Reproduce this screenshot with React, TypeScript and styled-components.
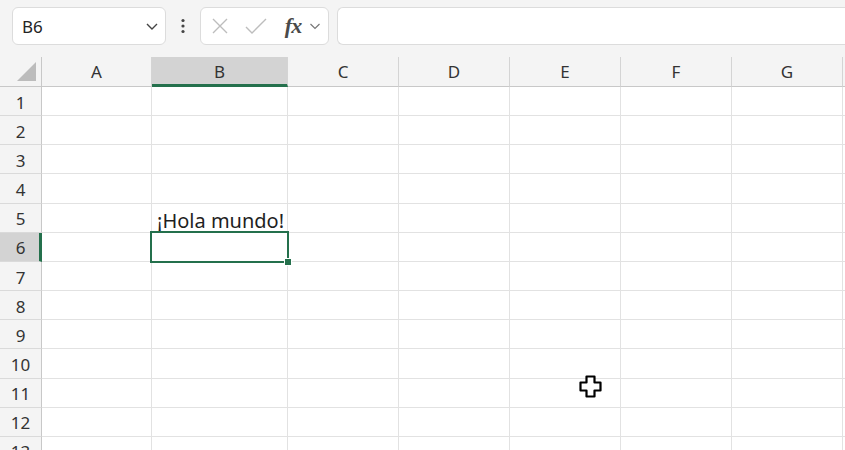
import styled, { createGlobalStyle } from "styled-components";

const GlobalStyle = createGlobalStyle`
  html, body {
    margin: 0;
    padding: 0;
    background: #f4f4f4;
    font-family: "Noto Sans", "Open Sans", sans-serif;
    overflow: hidden;
  }
`;

const Page = styled.div`
  width: 845px;
  height: 450px;
  overflow: hidden;
  background: #f4f4f4;
`;

const Toolbar = styled.div`
  display: flex;
  align-items: center;
  height: 38px;
  padding: 7px 0 12px 12px;
`;

const Box = styled.div<{ $w?: number }>`
  display: flex;
  align-items: center;
  height: 38px;
  box-sizing: border-box;
  background: #fff;
  border: 1px solid #dcdcdc;
  border-radius: 6px;
  ${(p) => (p.$w ? `width: ${p.$w}px;` : "flex: 1; border-right: none; border-radius: 6px 0 0 6px;")}
`;

const NameBox = styled(Box)`
  justify-content: space-between;
  padding: 0 6px 0 9px;
  font-size: 17px;
  color: #242424;
`;

const Kebab = styled.div`
  width: 34px;
  display: flex;
  justify-content: center;
  color: #444;
`;

const FormulaTools = styled(Box)`
  padding: 0 0 0 8px;
  margin-right: 8px;
`;

const ToolIcon = styled.div<{ $w: number }>`
  width: ${(p) => p.$w}px;
  display: flex;
  justify-content: center;
  align-items: center;
`;

const Fx = styled.span`
  font-family: "Liberation Serif", serif;
  font-style: italic;
  font-weight: 700;
  font-size: 22px;
  color: #4a4a4a;
  letter-spacing: -1px;
`;

const Sheet = styled.div`
  position: relative;
  display: grid;
  grid-template-columns: 42px 110px 136px 111px 111px 111px 111px 111px 1fr;
  grid-template-rows: 30px;
  grid-auto-rows: 29.17px;
  background: #fff;
`;

const Corner = styled.div`
  background: #f4f4f4;
  border-right: 1px solid #c8c8c8;
  border-bottom: 1px solid #c8c8c8;
  position: relative;
`;

const ColHead = styled.div<{ $sel?: boolean }>`
  display: flex;
  align-items: center;
  justify-content: center;
  box-sizing: border-box;
  font-size: 17px;
  color: #333;
  background: ${(p) => (p.$sel ? "#d3d3d3" : "#f4f4f4")};
  border-right: 1px solid #d4d4d4;
  border-bottom: ${(p) => (p.$sel ? "3px solid #24704c" : "1px solid #c8c8c8")};
  padding-top: ${(p) => (p.$sel ? "2px" : "0")};
`;

const RowHead = styled.div<{ $sel?: boolean }>`
  display: flex;
  align-items: center;
  justify-content: center;
  box-sizing: border-box;
  font-size: 17px;
  padding-top: 2px;
  color: #333;
  background: ${(p) => (p.$sel ? "#d3d3d3" : "#f4f4f4")};
  border-bottom: 1px solid #dadada;
  border-right: ${(p) => (p.$sel ? "3px solid #24704c" : "1px solid #c8c8c8")};
  padding-left: ${(p) => (p.$sel ? "2px" : "0")};
`;

const Cell = styled.div`
  position: relative;
  box-sizing: border-box;
  border-right: 1px solid #e2e2e2;
  border-bottom: 1px solid #e2e2e2;
  display: flex;
  align-items: flex-end;
  padding: 0 0 0 5px;
  font-size: 20px;
  color: #1f1f1f;
  line-height: 22px;
  white-space: nowrap;
`;

const Selection = styled.div`
  position: absolute;
  left: -2px;
  top: -2px;
  right: -2px;
  bottom: -2px;
  border: 2px solid #24704c;
  pointer-events: none;
  z-index: 2;
`;

const Handle = styled.div`
  position: absolute;
  right: -5px;
  bottom: -5px;
  width: 6px;
  height: 6px;
  background: #24704c;
  border: 1px solid #fff;
`;

const Cursor = styled.svg`
  position: absolute;
  left: 578px;
  top: 317px;
  z-index: 3;
`;

const cols = ["A", "B", "C", "D", "E", "F", "G", ""];
const rows = Array.from({ length: 13 }, (_, i) => i + 1);

export default function App() {
  return (
    <Page>
      <GlobalStyle />
      <Toolbar>
        <NameBox $w={154}>
          <span>B6</span>
          <svg width="14" height="14" viewBox="0 0 14 14">
            <path d="M2 5 L7 10 L12 5" fill="none" stroke="#444" strokeWidth="1.4" />
          </svg>
        </NameBox>
        <Kebab>
          <svg width="4" height="16" viewBox="0 0 4 16">
            <circle cx="2" cy="2.5" r="1.6" fill="#444" />
            <circle cx="2" cy="8" r="1.6" fill="#444" />
            <circle cx="2" cy="13.5" r="1.6" fill="#444" />
          </svg>
        </Kebab>
        <FormulaTools $w={129}>
          <ToolIcon $w={22}>
            <svg width="18" height="18" viewBox="0 0 18 18">
              <path d="M2 2 L16 16 M16 2 L2 16" stroke="#bdbdbd" strokeWidth="1.4" />
            </svg>
          </ToolIcon>
          <ToolIcon $w={50}>
            <svg width="24" height="18" viewBox="0 0 24 18">
              <path d="M2 10 L8 16 L22 2" fill="none" stroke="#bdbdbd" strokeWidth="1.4" />
            </svg>
          </ToolIcon>
          <ToolIcon $w={24}>
            <Fx>fx</Fx>
          </ToolIcon>
          <ToolIcon $w={20}>
            <svg width="12" height="12" viewBox="0 0 12 12">
              <path d="M1.5 4 L6 8.5 L10.5 4" fill="none" stroke="#777" strokeWidth="1.2" />
            </svg>
          </ToolIcon>
        </FormulaTools>
        <Box />
      </Toolbar>
      <Sheet>
        <Corner>
          <svg width="20" height="19" viewBox="0 0 20 19" style={{ position: "absolute", left: 17, top: 5 }}>
            <path d="M19 0 L19 19 L0 19 Z" fill="#bcbcbc" />
          </svg>
        </Corner>
        {cols.map((c, i) => (
          <ColHead key={i} $sel={c === "B"}>
            {c}
          </ColHead>
        ))}
        {rows.map((r) => (
          <>
            <RowHead key={`h${r}`} $sel={r === 6}>
              {r}
            </RowHead>
            {cols.map((c, i) => (
              <Cell key={`${r}-${i}`}>
                {r === 5 && c === "B" && "¡Hola mundo!"}
                {r === 6 && c === "B" && (
                  <Selection>
                    <Handle />
                  </Selection>
                )}
              </Cell>
            ))}
          </>
        ))}
        <Cursor width="26" height="26" viewBox="0 0 26 26">
          <path
            d="M8.5 2.5 H16.5 V8.5 H22.5 V16.5 H16.5 V22.5 H8.5 V16.5 H2.5 V8.5 H8.5 Z"
            fill="#fff"
            stroke="#000"
            strokeWidth="2.2"
            strokeLinejoin="round"
          />
        </Cursor>
      </Sheet>
    </Page>
  );
}
